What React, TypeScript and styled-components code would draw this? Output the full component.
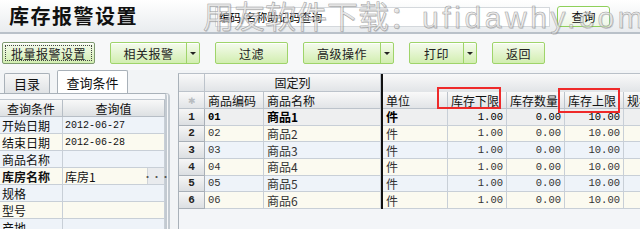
import React from 'react';
import styled, { createGlobalStyle } from 'styled-components';

const GlobalStyle = createGlobalStyle`
  html, body {
    margin: 0;
    padding: 0;
    background: #f2f4f6;
    overflow: hidden;
  }
  * { box-sizing: border-box; }
`;

const Page = styled.div`
  position: relative;
  width: 640px;
  height: 229px;
  overflow: hidden;
  background: #f2f4f6;
  font-family: "Noto Sans CJK SC", "Liberation Sans", sans-serif;
  font-size: 12px;
  color: #222;
`;

const Header = styled.div`
  height: 34px;
  display: flex;
  align-items: center;
  padding-left: 9px;
  background: linear-gradient(#ffffff, #e9ecef);
  border-bottom: 2px solid #b9c1c9;
`;

const Title = styled.h1`
  margin: 0;
  width: 206px;
  font-size: 20px;
  font-weight: bold;
  letter-spacing: 1.5px;
  line-height: 1;
  color: #111;
`;

const SearchBox = styled.div`
  width: 335px;
  height: 20px;
  margin-top: 1px;
  padding-left: 3px;
  display: flex;
  align-items: center;
  background: #fff;
  border: 1px solid #d4d8dc;
  font-size: 11px;
  color: #000;
`;

const SearchButton = styled.button`
  margin-left: 7px;
  width: 53px;
  height: 21px;
  padding: 0;
  border: 1px solid #8fd05a;
  border-radius: 3px;
  background: linear-gradient(#ffffff, #eef7e6);
  font-family: inherit;
  font-size: 12px;
  color: #111;
`;

const Watermark = styled.div`
  position: absolute;
  left: 203px;
  top: -3px;
  white-space: nowrap;
  font-size: 31px;
  line-height: 36px;
  color: rgba(236, 236, 236, 0.55);
  -webkit-text-stroke: 0.5px #9a9a9a;
  text-shadow: 1px 1px 0 rgba(0, 0, 0, 0.12);
  pointer-events: none;
`;

const WatermarkLatin = styled.span`
  font-family: "Liberation Sans", sans-serif;
  font-size: 30px;
  letter-spacing: 3.6px;
  margin-left: 2px;
`;

const Toolbar = styled.div`
  height: 36px;
  display: flex;
  align-items: flex-start;
  gap: 15px;
  padding: 8px 0 0 2px;
  background: #f7f8f9;
`;

const ButtonShell = styled.div<{ $w: number; $focus?: boolean }>`
  width: ${p => p.$w}px;
  height: 22px;
  display: flex;
  border: 1px solid ${p => (p.$focus ? '#7f9a70' : '#9fd46a')};
  border-radius: 2px;
  background: linear-gradient(#f5fbee, #d2eeb0);
  box-shadow: inset 0 1px 0 #ffffff;
`;

const ButtonLabel = styled.span<{ $focus?: boolean }>`
  flex: 1;
  display: flex;
  align-items: center;
  justify-content: center;
  margin: ${p => (p.$focus ? '2px' : '0')};
  border: ${p => (p.$focus ? '1px dotted #444' : 'none')};
  font-size: 12px;
  color: #222;
  letter-spacing: 0.5px;
`;

const DropPart = styled.span`
  width: 13px;
  display: flex;
  align-items: center;
  justify-content: center;
  border-left: 1px solid #9fd46a;
  &::after {
    content: '';
    border-left: 3px solid transparent;
    border-right: 3px solid transparent;
    border-top: 3px solid #222;
    margin-top: 1px;
  }
`;

const Content = styled.div`
  display: flex;
  gap: 8px;
  height: 159px;
`;

const LeftPanel = styled.div`
  width: 170px;
  display: flex;
  flex-direction: column;
`;

const Tabs = styled.div`
  height: 23px;
  display: flex;
  align-items: flex-end;
  gap: 7px;
  padding-left: 4px;
`;

const Tab = styled.div<{ $active?: boolean }>`
  height: ${p => (p.$active ? 23 : 20)}px;
  width: ${p => (p.$active ? 71 : 46)}px;
  display: flex;
  align-items: center;
  justify-content: center;
  border: 1px solid #a9b1b9;
  border-bottom: none;
  border-radius: 2px 2px 0 0;
  background: ${p => (p.$active ? '#ffffff' : 'linear-gradient(#f7f7f7, #dfe2e5)')};
  font-size: 13px;
  color: #111;
`;

const PanelBody = styled.div`
  flex: 1;
  padding-top: 5px;
  border-top: 1px solid #a9b1b9;
  border-right: 5px double #c3cad1;
  border-radius: 0 4px 0 0;
  background: #f7f8fa;
`;

const QueryTable = styled.div`
  display: grid;
  grid-template-columns: 63px 102px;
  grid-auto-rows: 17px;
  border-top: 1px solid #c0c7cf;
`;

const QueryHead = styled.div`
  display: flex;
  align-items: center;
  justify-content: center;
  background: linear-gradient(#f8f8f8, #dde0e3);
  border-right: 1px solid #b7bec6;
  border-bottom: 1px solid #b7bec6;
  font-size: 12px;
  color: #111;
`;

const QueryCell = styled.div<{ $cream?: boolean; $bold?: boolean; $mono?: boolean }>`
  display: flex;
  align-items: center;
  padding-left: 2px;
  background: ${p => (p.$cream ? '#fbfaf0' : '#eef3f9')};
  border-right: 1px solid #c8cfd7;
  border-bottom: 1px solid #c8cfd7;
  font-family: ${p => (p.$mono ? '"Liberation Mono", monospace' : 'inherit')};
  font-size: ${p => (p.$mono ? '10px' : '12px')};
  font-weight: ${p => (p.$bold ? 'bold' : 'normal')};
  color: #111;
`;

const PickButton = styled.span`
  margin-left: auto;
  width: 17px;
  height: 100%;
  display: flex;
  align-items: center;
  justify-content: center;
  background: #e9ebee;
  border-left: 1px solid #d0d4d8;
  font-size: 10px;
  letter-spacing: -1px;
  color: #555;
`;

const GridFrame = styled.div`
  flex: 1;
  margin-top: 3px;
  overflow: hidden;
  border-left: 1px solid #a9b1b9;
  border-top: 1px solid #b9c0c8;
  background: #f3f5f8;
`;

const Grid = styled.div`
  display: grid;
  grid-template-columns: 26px 59px 117px 2px 65px 59px 58px 59px 40px;
  grid-template-rows: 18px 17px repeat(6, 16.67px);
  width: 485px;
`;

const HeadCell = styled.div<{ $span?: number; $center?: boolean; $plain?: boolean }>`
  grid-column: span ${p => p.$span ?? 1};
  display: flex;
  align-items: center;
  justify-content: ${p => (p.$center ? 'center' : 'flex-start')};
  padding-left: ${p => (p.$center ? 0 : 3)}px;
  background: linear-gradient(#f9f9f9, #e1e4e7);
  border-right: ${p => (p.$plain ? 'none' : '1px solid #bcc3cb')};
  border-bottom: ${p => (p.$plain ? 'none' : '1px solid #bcc3cb')};
  font-size: 12px;
  color: #111;
  white-space: nowrap;
  overflow: hidden;
`;

const Star = styled.span`
  font-size: 9px;
  color: #b8bcc0;
`;

const Divider = styled.div`
  background: #111;
`;

const RowNum = styled.div`
  display: flex;
  align-items: center;
  justify-content: center;
  background: linear-gradient(#f6f6f6, #dcdfe2);
  border-right: 1px solid #a9b0b8;
  border-bottom: 1px solid #a9b0b8;
  font-family: "Liberation Mono", monospace;
  font-size: 11px;
  font-weight: bold;
  color: #222;
`;

type Tone = 'sel' | 'cream' | 'blue';

const toneColor: Record<Tone, string> = {
  sel: '#eeeff0',
  cream: '#fbfaf0',
  blue: '#eef3f9',
};

const DataCell = styled.div<{ $tone: Tone; $right?: boolean; $mono?: boolean }>`
  display: flex;
  align-items: center;
  justify-content: ${p => (p.$right ? 'flex-end' : 'flex-start')};
  padding: 0 3px;
  background: ${p => toneColor[p.$tone]};
  border-right: 1px solid #c8cfd7;
  border-bottom: 1px solid #c8cfd7;
  font-family: ${p => (p.$mono ? '"Liberation Mono", monospace' : 'inherit')};
  font-size: ${p => (p.$mono ? '10.5px' : '12px')};
  font-weight: ${p => (p.$tone === 'sel' && !p.$right ? 'bold' : 'normal')};
  color: ${p => (p.$tone === 'sel' ? '#000' : '#333')};
  white-space: nowrap;
  overflow: hidden;
`;

const Mark = styled.div<{ $x: number; $y: number; $w: number; $h: number }>`
  position: absolute;
  left: ${p => p.$x}px;
  top: ${p => p.$y}px;
  width: ${p => p.$w}px;
  height: ${p => p.$h}px;
  border: 2px solid #ee2a2a;
  pointer-events: none;
`;

const toolButtons = [
  { label: '批量报警设置', w: 93, focus: true },
  { label: '相关报警', w: 90, drop: true },
  { label: '过滤', w: 73 },
  { label: '高级操作', w: 91, drop: true },
  { label: '打印', w: 68, drop: true },
  { label: '返回', w: 53 },
];

const queryRows = [
  { name: '开始日期', value: '2012-06-27' },
  { name: '结束日期', value: '2012-06-28' },
  { name: '商品名称', value: '' },
  { name: '库房名称', value: '库房1', pick: true },
  { name: '规格', value: '' },
  { name: '型号', value: '' },
  { name: '产地', value: '' },
];

const goods = [1, 2, 3, 4, 5, 6].map(n => ({
  no: n,
  code: `0${n}`,
  name: `商品${n}`,
  unit: '件',
  low: '1.00',
  qty: '0.00',
  high: '10.00',
}));

const App: React.FC = () => {
  return (
    <Page>
      <GlobalStyle />
      <Header>
        <Title>库存报警设置</Title>
        <SearchBox>编码/名称助记码查询</SearchBox>
        <SearchButton>查询</SearchButton>
      </Header>
      <Watermark>
        用友软件下载：<WatermarkLatin>ufidawhy.com</WatermarkLatin>
      </Watermark>

      <Toolbar>
        {toolButtons.map(b => (
          <ButtonShell key={b.label} $w={b.w} $focus={b.focus}>
            <ButtonLabel $focus={b.focus}>{b.label}</ButtonLabel>
            {b.drop && <DropPart />}
          </ButtonShell>
        ))}
      </Toolbar>

      <Content>
        <LeftPanel>
          <Tabs>
            <Tab>目录</Tab>
            <Tab $active>查询条件</Tab>
          </Tabs>
          <PanelBody>
            <QueryTable>
              <QueryHead>查询条件</QueryHead>
              <QueryHead>查询值</QueryHead>
              {queryRows.map((r, i) => (
                <React.Fragment key={r.name}>
                  <QueryCell $cream={i % 2 === 1} $bold={r.pick}>{r.name}</QueryCell>
                  <QueryCell $cream={i % 2 === 1} $mono={/^\d/.test(r.value)}>
                    {r.value}
                    {r.pick && <PickButton>···</PickButton>}
                  </QueryCell>
                </React.Fragment>
              ))}
            </QueryTable>
          </PanelBody>
        </LeftPanel>

        <GridFrame>
          <Grid>
            <HeadCell />
            <HeadCell $span={2} $center>固定列</HeadCell>
            <Divider />
            <HeadCell $span={5} $plain />

            <HeadCell $center><Star>✱</Star></HeadCell>
            <HeadCell>商品编码</HeadCell>
            <HeadCell>商品名称</HeadCell>
            <Divider />
            <HeadCell>单位</HeadCell>
            <HeadCell>库存下限</HeadCell>
            <HeadCell>库存数量</HeadCell>
            <HeadCell>库存上限</HeadCell>
            <HeadCell>规格</HeadCell>

            {goods.map((g, i) => {
              const tone: Tone = i === 0 ? 'sel' : i % 2 === 1 ? 'cream' : 'blue';
              return (
                <React.Fragment key={g.no}>
                  <RowNum>{g.no}</RowNum>
                  <DataCell $tone={tone} $mono>{g.code}</DataCell>
                  <DataCell $tone={tone}>{g.name}</DataCell>
                  <Divider />
                  <DataCell $tone={tone}>{g.unit}</DataCell>
                  <DataCell $tone={tone} $right $mono>{g.low}</DataCell>
                  <DataCell $tone={tone} $right $mono>{g.qty}</DataCell>
                  <DataCell $tone={tone} $right $mono>{g.high}</DataCell>
                  <DataCell $tone={tone} />
                </React.Fragment>
              );
            })}
          </Grid>
        </GridFrame>
      </Content>

      <Mark $x={437} $y={87} $w={64} $h={22} />
      <Mark $x={558} $y={88} $w={62} $h={25} />
    </Page>
  );
};

export default App;
